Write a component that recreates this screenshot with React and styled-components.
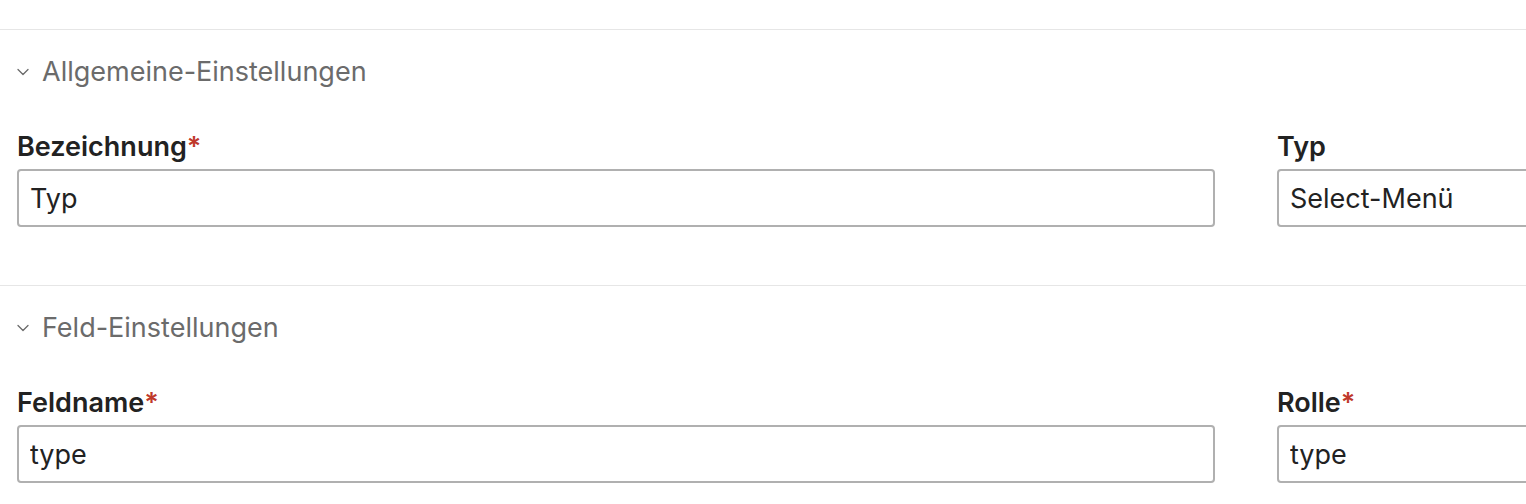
import React from "react";
import styled, { createGlobalStyle } from "styled-components";

const GlobalStyle = createGlobalStyle`
  html, body {
    margin: 0;
    padding: 0;
    background: #ffffff;
    overflow: hidden;
  }
  body {
    font-family: Inter, "Noto Sans", sans-serif;
    -webkit-font-smoothing: antialiased;
  }
`;

const Page = styled.div`
  padding-top: 29px;
  width: 1526px;
  overflow: hidden;
`;

const Section = styled.section`
  border-top: 1px solid #e6e6e6;
  padding: 27px 0 58px 17px;
`;

const SectionHeader = styled.button`
  display: flex;
  align-items: center;
  gap: 13px;
  padding: 0;
  margin: 0 0 45px;
  border: none;
  background: none;
  font-family: inherit;
  font-size: 27px;
  line-height: 30px;
  color: #6b6b6b;
  cursor: pointer;
`;

const Chevron = styled.svg`
  width: 12px;
  height: 8px;
  flex: none;
`;

const Row = styled.div`
  display: grid;
  grid-template-columns: 1198px 1198px;
  column-gap: 62px;
`;

const Field = styled.div`
  display: flex;
  flex-direction: column;
`;

const Label = styled.label`
  font-size: 27px;
  line-height: 30px;
  font-weight: 600;
  color: #222222;
  margin-bottom: 7px;
`;

const Required = styled.span`
  color: #c0392b;
`;

const Input = styled.input`
  box-sizing: border-box;
  height: 58px;
  width: 100%;
  padding: 0 11px;
  border: 2px solid #b0b0b0;
  border-radius: 4px;
  font-family: inherit;
  font-size: 27px;
  color: #222222;
  background: #fff;
  outline: none;
`;

const ChevronDown = () => (
  <Chevron viewBox="0 0 12 8" fill="none">
    <path d="M1 1.5l5 5 5-5" stroke="#6b6b6b" strokeWidth="1.3" strokeLinecap="round" strokeLinejoin="round" />
  </Chevron>
);

const FormField = ({ label, required, value }) => (
  <Field>
    <Label>
      {label}
      {required && <Required>*</Required>}
    </Label>
    <Input defaultValue={value} />
  </Field>
);

const sections = [
  {
    title: "Allgemeine-Einstellungen",
    fields: [
      { label: "Bezeichnung", required: true, value: "Typ" },
      { label: "Typ", required: false, value: "Select-Menü" },
    ],
  },
  {
    title: "Feld-Einstellungen",
    fields: [
      { label: "Feldname", required: true, value: "type" },
      { label: "Rolle", required: true, value: "type" },
    ],
  },
];

export default function App() {
  return (
    <>
      <GlobalStyle />
      <Page>
        {sections.map((s) => (
          <Section key={s.title}>
            <SectionHeader type="button">
              <ChevronDown />
              {s.title}
            </SectionHeader>
            <Row>
              {s.fields.map((f) => (
                <FormField key={f.label} {...f} />
              ))}
            </Row>
          </Section>
        ))}
      </Page>
    </>
  );
}
